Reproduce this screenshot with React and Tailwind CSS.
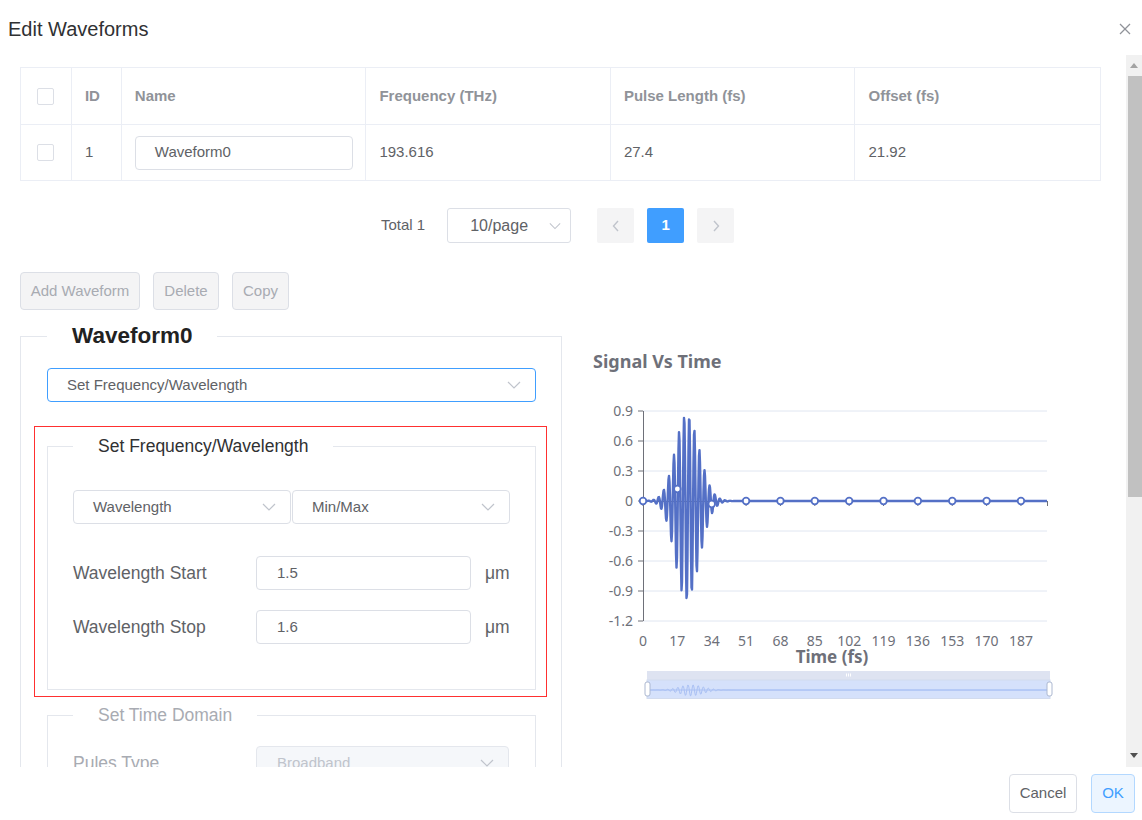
import React from "react";

const F = { fontFamily: '"Liberation Sans", Arial, sans-serif' };

function Chevron({ color = "#c0c4cc", w = 14 }) {
  return (
    <svg width={w} height="8" viewBox="0 0 14 8" fill="none">
      <polyline points="1,1 7,7 13,1" stroke={color} strokeWidth="1.2" />
    </svg>
  );
}

function Checkbox() {
  return <div className="w-[17px] h-[17px] border border-[#dcdfe6] rounded-[2px] bg-white" />;
}

function Select({ text, className = "", textClass = "", border = "border-[#dcdfe6]", bg = "bg-white", chevron = "#c0c4cc" }) {
  return (
    <div className={`flex items-center justify-between h-[34px] border ${border} ${bg} rounded-[4px] ${className}`}>
      <span className={textClass}>{text}</span>
      <Chevron color={chevron} />
    </div>
  );
}

function valueAt(x) {
  const dx = x - 686.7;
  const w = dx < 0 ? 16 : 17.5;
  const env = Math.exp(-((dx / w) ** 2));
  let v = -Math.cos((2 * Math.PI * dx) / 5.1) * env;
  if (v > 0) v *= 0.87;
  return v;
}

function buildWave() {
  const pts = [];
  const mini = [];
  for (let x = 643; x <= 1047; x += 0.5) {
    const v = valueAt(x);
    pts.push(`${x.toFixed(1)},${(501 - v * 100).toFixed(2)}`);
    const mx = 647 + (x - 643) * (403 / 404);
    mini.push(`${mx.toFixed(1)},${(690 - v * 6).toFixed(2)}`);
  }
  return { line: pts.join(" "), mini: mini.join(" ") };
}

function Chart() {
  const { line, mini } = buildWave();
  const yLabels = ["0.9", "0.6", "0.3", "0", "-0.3", "-0.6", "-0.9", "-1.2"];
  const xLabels = ["0", "17", "34", "51", "68", "85", "102", "119", "136", "153", "170", "187"];
  const markerVals = [0, 0.12, -0.03, 0, 0, 0, 0, 0, 0, 0, 0, 0];
  const step = 34.36;
  const cf = { fontFamily: '"Noto Sans", "Open Sans", sans-serif' };
  return (
    <svg width="480" height="330" viewBox="580 380 480 330" style={cf}>
      {yLabels.map((l, i) => {
        const y = 411 + i * 30;
        return (
          <g key={l}>
            <line x1="643" x2="1047" y1={y} y2={y} stroke="#e0e6f1" strokeWidth="1" />
            <line x1="638" x2="643" y1={y} y2={y} stroke="#6e7079" strokeWidth="1" />
            <text x="633" y={y + 5} textAnchor="end" fontSize="14" fill="#6e7079">{l}</text>
          </g>
        );
      })}
      <line x1="643.5" x2="643.5" y1="411" y2="621" stroke="#6e7079" strokeWidth="1" />
      <line x1="643" x2="1048" y1="501.5" y2="501.5" stroke="#6e7079" strokeWidth="1" />
      {xLabels.map((l, i) => {
        const x = 643 + i * step;
        return (
          <g key={l}>
            <line x1={x} x2={x} y1="501" y2="506" stroke="#6e7079" strokeWidth="1" />
            <text x={x} y="646" textAnchor="middle" fontSize="14" fill="#6e7079">{l}</text>
          </g>
        );
      })}
      <line x1="1047.5" x2="1047.5" y1="501" y2="506" stroke="#6e7079" strokeWidth="1" />
      <polyline points={line} fill="none" stroke="#5470c6" strokeWidth="2.4" strokeLinejoin="round" />
      {xLabels.map((l, i) => {
        const x = 643 + i * step;
        const y = 501 - markerVals[i] * 100;
        return <circle key={"c" + l} cx={x} cy={y} r="3.3" fill="#fff" stroke="#5470c6" strokeWidth="1.8" />;
      })}
      <text x="832" y="663" textAnchor="middle" fontSize="17" fontWeight="700" fill="#6e7079">Time (fs)</text>
      {/* data zoom */}
      <rect x="647" y="671" width="403" height="9" fill="#dee3f1" />
      <rect x="846" y="673.5" width="1" height="3" fill="#fff" />
      <rect x="848" y="673.5" width="1" height="3" fill="#fff" />
      <rect x="850" y="673.5" width="1" height="3" fill="#fff" />
      <rect x="647" y="680" width="403" height="18.5" fill="#d5e1fb" stroke="#d2dbee" strokeWidth="1" />
      <line x1="647" x2="1050" y1="690" y2="690" stroke="#a9c0f4" strokeWidth="1" />
      <polyline points={mini} fill="none" stroke="#a9c0f4" strokeWidth="1" />
      <rect x="645" y="682" width="5" height="14" rx="2" fill="#fff" stroke="#acb8d1" strokeWidth="1" />
      <rect x="1047" y="682" width="5" height="14" rx="2" fill="#fff" stroke="#acb8d1" strokeWidth="1" />
    </svg>
  );
}

export default function App() {
  const cols = [
    { w: "w-[51px]" },
    { w: "w-[50px]" },
    { w: "w-[245px]" },
    { w: "w-[245px]" },
    { w: "w-[245px]" },
    { w: "w-[245px]" },
  ];
  const header = ["", "ID", "Name", "Frequency (THz)", "Pulse Length (fs)", "Offset (fs)"];
  const row = ["", "1", "", "193.616", "27.4", "21.92"];

  return (
    <div className="w-[1142px] h-[820px] bg-white flex flex-col overflow-hidden" style={F}>
      {/* header */}
      <div className="h-[55px] flex items-center justify-between pl-[8px] pr-[11px] pt-[3px] shrink-0">
        <span className="text-[20px] text-[#303133]">Edit Waveforms</span>
        <svg width="12" height="12" viewBox="0 0 12 12">
          <line x1="1" y1="1" x2="11" y2="11" stroke="#909399" strokeWidth="1.2" />
          <line x1="11" y1="1" x2="1" y2="11" stroke="#909399" strokeWidth="1.2" />
        </svg>
      </div>

      {/* body */}
      <div className="h-[712px] flex shrink-0">
        <div className="flex-1 overflow-hidden pt-[12px] pl-[20px]">
          {/* table */}
          <div className="w-[1081px] border border-[#ebeef5]">
            <div className="flex h-[56px]">
              {cols.map((c, i) => (
                <div
                  key={i}
                  className={`${c.w} flex items-center ${i === 0 ? "justify-center" : "pl-[13px]"} ${i < 5 ? "border-r border-[#ebeef5]" : ""} text-[15px] font-bold text-[#909399]`}
                >
                  {i === 0 ? <Checkbox /> : header[i]}
                </div>
              ))}
            </div>
            <div className="flex h-[56px] border-t border-[#ebeef5]">
              {cols.map((c, i) => (
                <div
                  key={i}
                  className={`${c.w} flex items-center ${i === 0 ? "justify-center" : "pl-[13px]"} ${i < 5 ? "border-r border-[#ebeef5]" : ""} text-[15px] text-[#606266]`}
                >
                  {i === 0 ? (
                    <Checkbox />
                  ) : i === 2 ? (
                    <div className="w-[218px] h-[34px] border border-[#dcdfe6] rounded-[4px] flex items-center pl-[19px]">
                      Waveform0
                    </div>
                  ) : (
                    row[i]
                  )}
                </div>
              ))}
            </div>
          </div>

          {/* pagination */}
          <div className="mt-[27px] h-[35px] flex items-center pl-[361px]">
            <span className="text-[15px] text-[#606266]">Total 1</span>
            <div className="ml-[22px] w-[124px] h-[35px] border border-[#dcdfe6] rounded-[3px] flex items-center justify-between pl-[22px] pr-[9px]">
              <span className="text-[16px] text-[#606266]">10/page</span>
              <Chevron w={12} />
            </div>
            <div className="ml-[26px] w-[37px] h-[35px] bg-[#f4f4f5] rounded-[2px] flex items-center justify-center">
              <svg width="8" height="12" viewBox="0 0 8 12">
                <polyline points="6,1 1.5,6 6,11" fill="none" stroke="#c0c4cc" strokeWidth="1.4" />
              </svg>
            </div>
            <div className="ml-[13px] w-[37px] h-[35px] bg-[#409eff] rounded-[2px] flex items-center justify-center text-white font-bold text-[15px]">
              1
            </div>
            <div className="ml-[13px] w-[37px] h-[35px] bg-[#f4f4f5] rounded-[2px] flex items-center justify-center">
              <svg width="8" height="12" viewBox="0 0 8 12">
                <polyline points="2,1 6.5,6 2,11" fill="none" stroke="#c0c4cc" strokeWidth="1.4" />
              </svg>
            </div>
          </div>

          {/* buttons */}
          <div className="mt-[29px] flex gap-[13px]">
            {[
              ["Add Waveform", "w-[120px]"],
              ["Delete", "w-[66px]"],
              ["Copy", "w-[57px]"],
            ].map(([t, w]) => (
              <div
                key={t}
                className={`${w} h-[38px] bg-[#f4f4f5] border border-[#dcdfe6] rounded-[4px] flex items-center justify-center text-[15px] text-[#a8abb2]`}
              >
                {t}
              </div>
            ))}
          </div>

          {/* lower section */}
          <div className="mt-[14px] flex items-start">
            <fieldset className="w-[542px] min-w-0 shrink-0 border border-[#e4e7ed] pl-[26px] pr-[25px] pb-[40px]">
              <legend className="px-[25px] text-[22.5px] leading-[24px] font-bold text-[#222]">Waveform0</legend>
              <Select
                text="Set Frequency/Wavelength"
                className="mt-[20px] pl-[19px] pr-[14px]"
                border="border-[#409eff]"
                textClass="text-[15px] text-[#606266]"
              />

              <div className="mt-[24px] ml-[-13px] mr-[-11px] border border-[#ff3030] pl-[12px] pr-[10px] pt-[7px] pb-[6px]">
                <fieldset className="min-w-0 border border-[#e4e7ed] px-[25px] pb-[45px]">
                  <legend className="px-[25px] text-[17.5px] leading-[24px] text-[#303133]">
                    Set Frequency/Wavelength
                  </legend>
                  <div className="mt-[32px] flex gap-[1px]">
                    <Select text="Wavelength" className="flex-1 min-w-0 pl-[19px] pr-[14px]" textClass="text-[15px] text-[#606266]" />
                    <Select text="Min/Max" className="flex-1 min-w-0 pl-[19px] pr-[14px]" textClass="text-[15px] text-[#606266]" />
                  </div>
                  <div className="mt-[32px] flex items-center h-[34px]">
                    <span className="w-[183px] shrink-0 text-[17.5px] text-[#606266]">Wavelength Start</span>
                    <div className="w-[215px] shrink-0 h-[34px] border border-[#dcdfe6] rounded-[4px] flex items-center pl-[20px] text-[15px] text-[#606266]">
                      1.5
                    </div>
                    <span className="ml-[14px] text-[17.5px] text-[#606266]">μm</span>
                  </div>
                  <div className="mt-[20px] flex items-center h-[34px]">
                    <span className="w-[183px] shrink-0 text-[17.5px] text-[#606266]">Wavelength Stop</span>
                    <div className="w-[215px] shrink-0 h-[34px] border border-[#dcdfe6] rounded-[4px] flex items-center pl-[20px] text-[15px] text-[#606266]">
                      1.6
                    </div>
                    <span className="ml-[14px] text-[17.5px] text-[#606266]">μm</span>
                  </div>
                </fieldset>
              </div>

              <fieldset className="mt-[6px] min-w-0 border border-[#e4e7ed] px-[25px] pb-[44px]">
                <legend className="px-[25px] text-[17.5px] leading-[24px] text-[#a8abb2]">Set Time Domain</legend>
                <div className="mt-[19px] flex items-center h-[34px]">
                  <span className="w-[183px] shrink-0 text-[17.5px] text-[#a8abb2]">Pules Type</span>
                  <Select
                    text="Broadband"
                    className="w-[253px] shrink-0 pl-[20px] pr-[14px]"
                    border="border-[#e4e7ed]"
                    bg="bg-[#f5f7fa]"
                    textClass="text-[15px] text-[#c0c4cc]"
                  />
                </div>
                <div className="mt-[20px] flex items-center h-[34px]">
                  <span className="w-[183px] shrink-0 text-[17.5px] text-[#a8abb2]">Pulse Length</span>
                  <div className="w-[215px] h-[34px] border border-[#e4e7ed] bg-[#f5f7fa] rounded-[4px]" />
                </div>
              </fieldset>
            </fieldset>

            <div className="ml-[18px] flex flex-col">
              <div
                className="mt-[26px] pl-[13px] text-[18px] leading-[22px] font-bold text-[#6e7079]"
                style={{ fontFamily: '"Noto Sans", "Open Sans", sans-serif' }}
              >
                Signal Vs Time
              </div>
              <div className="mt-[8px]">
                <Chart />
              </div>
            </div>
          </div>
        </div>

        {/* scrollbar */}
        <div className="w-[16px] bg-[#f1f1f1] flex flex-col shrink-0">
          <div className="h-[21px] flex items-center justify-center">
            <svg width="8" height="5" viewBox="0 0 8 5">
              <polygon points="0,5 4,0 8,5" fill="#a3a3a3" />
            </svg>
          </div>
          <div className="h-[421px] ml-[2px] bg-[#c1c1c1]" />
          <div className="flex-1" />
          <div className="h-[24px] flex items-start justify-center pt-[10px]">
            <svg width="8" height="5" viewBox="0 0 8 5">
              <polygon points="0,0 8,0 4,5" fill="#505050" />
            </svg>
          </div>
        </div>
      </div>

      {/* footer */}
      <div className="h-[53px] flex items-center justify-end gap-[14px] pr-[7px] shrink-0">
        <div className="w-[68px] h-[39px] border border-[#dcdfe6] rounded-[4px] flex items-center justify-center text-[15px] text-[#606266]">
          Cancel
        </div>
        <div className="w-[44px] h-[39px] border border-[#b3d8ff] bg-[#ecf5ff] rounded-[4px] flex items-center justify-center text-[15px] text-[#409eff]">
          OK
        </div>
      </div>
    </div>
  );
}
